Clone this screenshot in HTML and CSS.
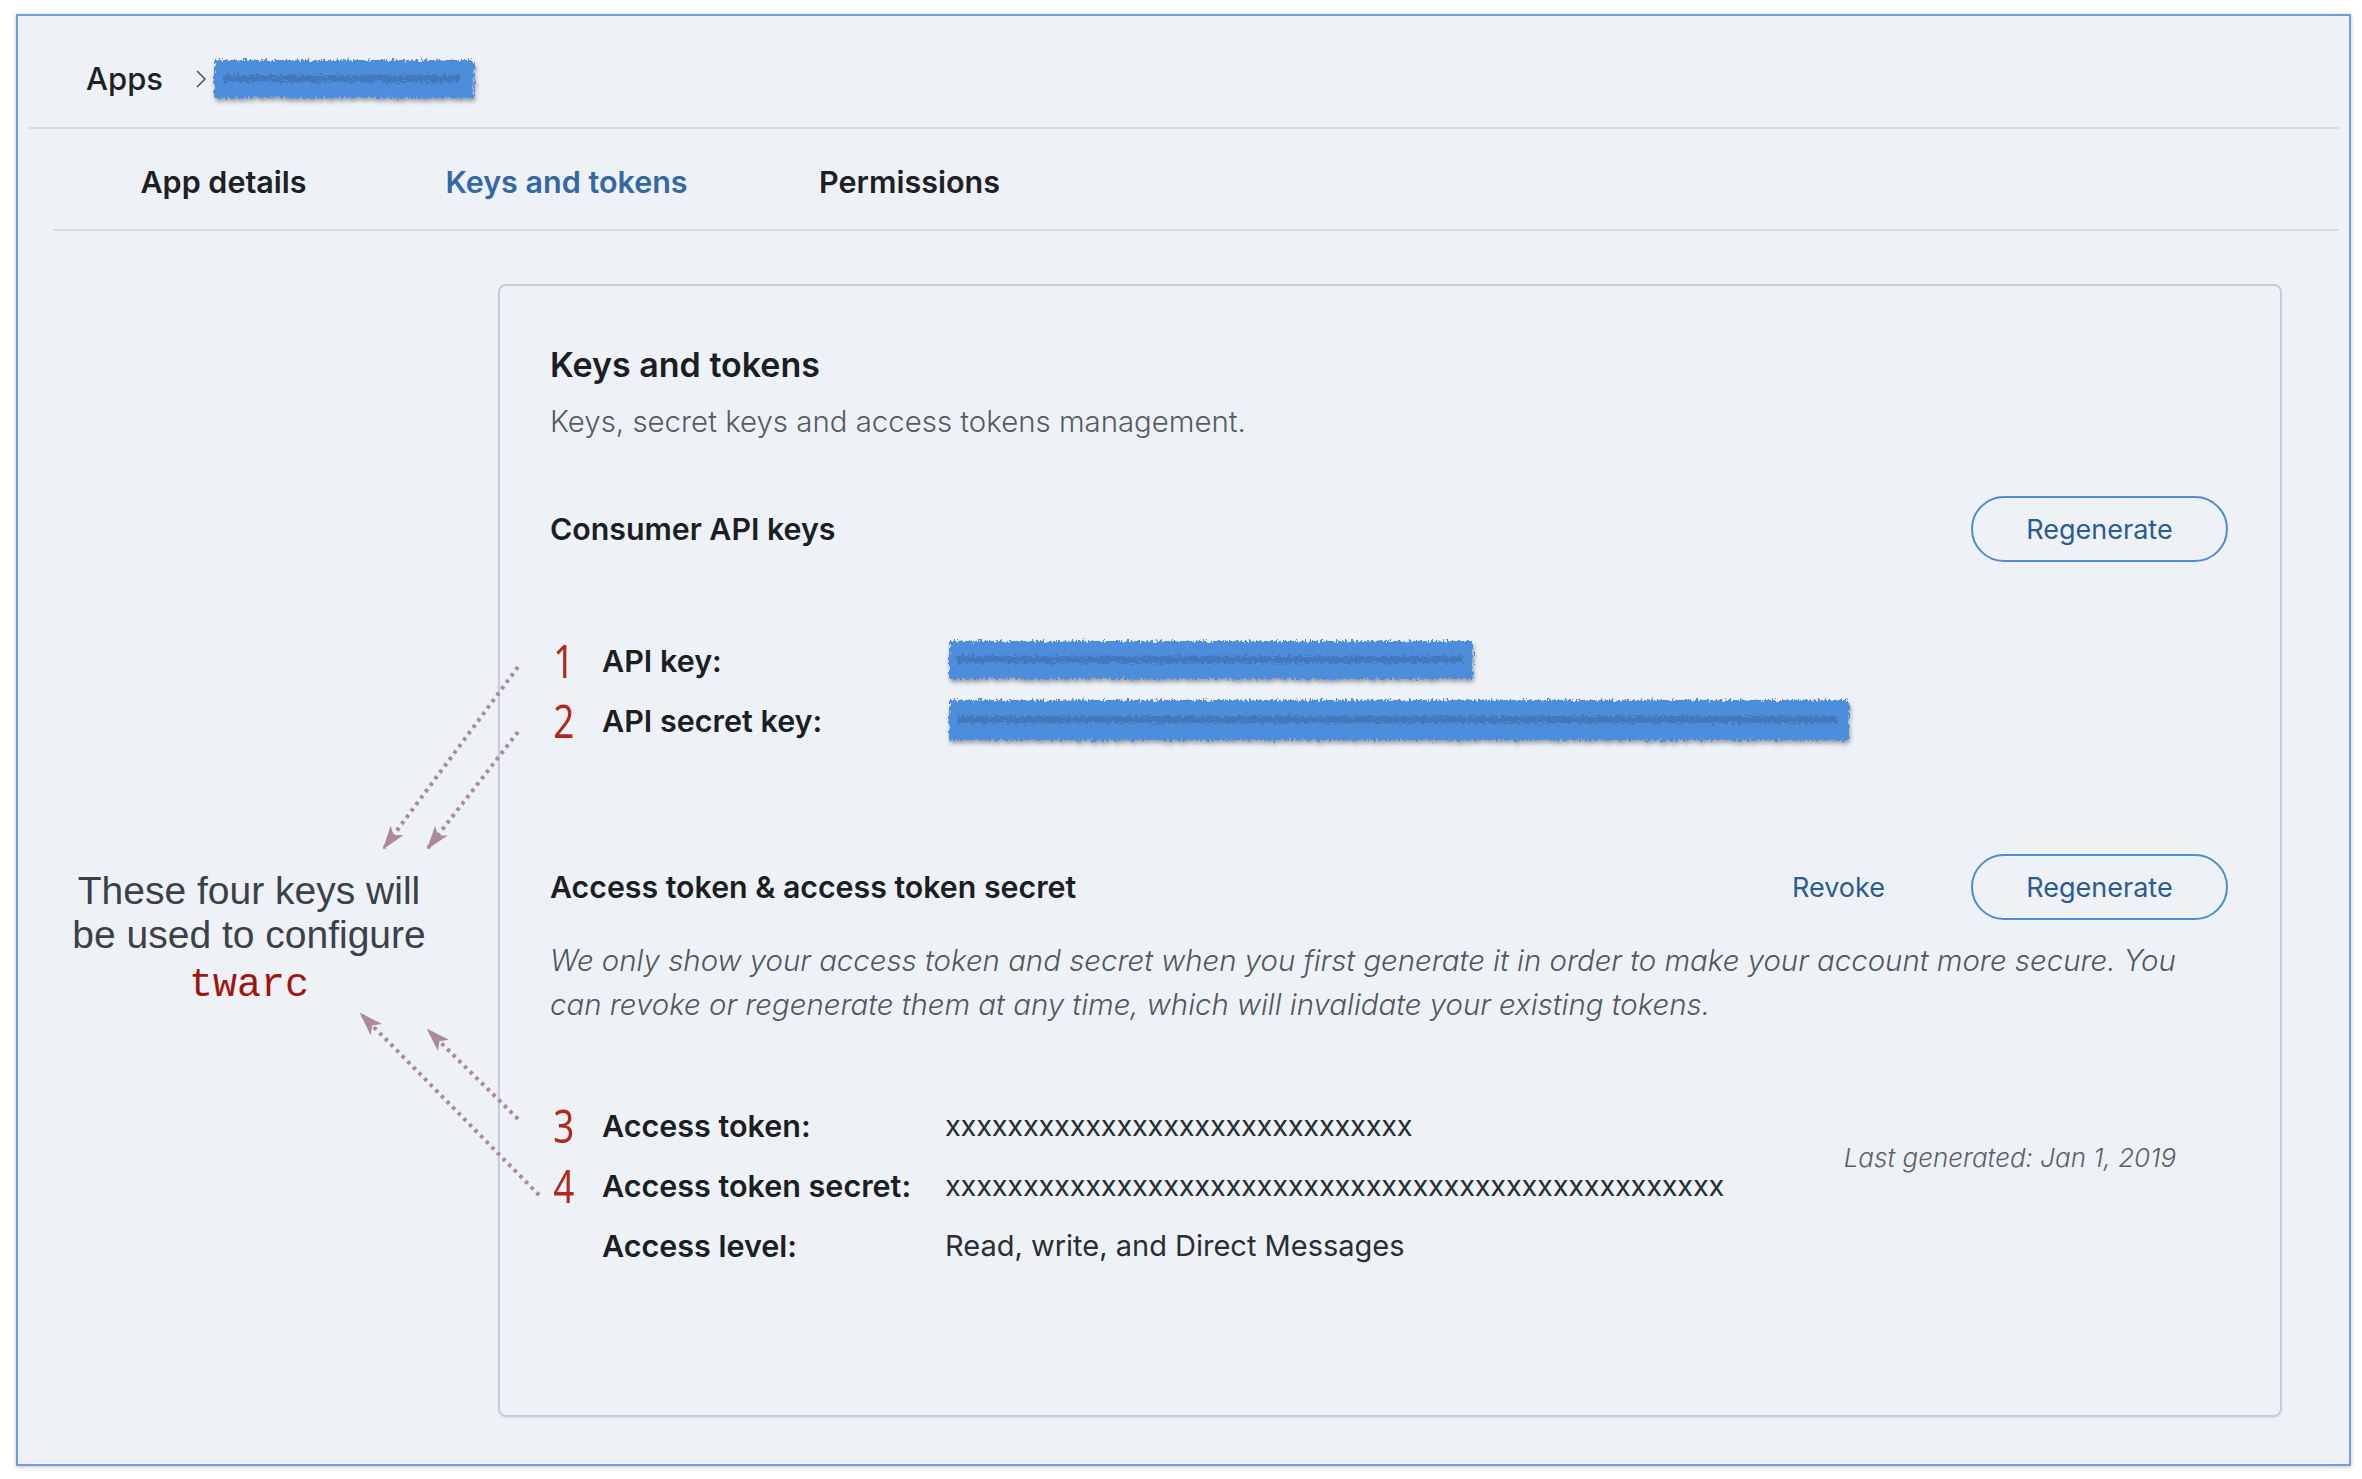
FILE: index.html
```html
<!DOCTYPE html>
<html lang="en">
<head>
<meta charset="utf-8">
<title>Keys and tokens</title>
<link rel="stylesheet" href="styles.css">
</head>
<body>
<svg class="defs" width="0" height="0" aria-hidden="true">
  <defs>
    <filter id="rough" x="-3%" y="-40%" width="106%" height="180%">
      <feTurbulence type="fractalNoise" baseFrequency="0.45 0.2" numOctaves="3" seed="4" result="n"/>
      <feDisplacementMap in="SourceGraphic" in2="n" scale="8" xChannelSelector="R" yChannelSelector="G"/>
    </filter>
    <filter id="streak" x="-3%" y="-80%" width="106%" height="260%">
      <feTurbulence type="fractalNoise" baseFrequency="0.3 0.6" numOctaves="3" seed="9" result="n"/>
      <feDisplacementMap in="SourceGraphic" in2="n" scale="10" xChannelSelector="R" yChannelSelector="G"/>
    </filter>
    <marker id="head" viewBox="0 0 24 16" refX="22" refY="8" markerWidth="24" markerHeight="16" markerUnits="userSpaceOnUse" orient="auto">
      <path d="M0 0 L24 8 L0 16 L6 8 Z" fill="#a98b9b"/>
    </marker>
  </defs>
</svg>

<div class="frame">
  <header class="crumbs">
    <span class="crumb">Apps</span>
    <svg class="chev" viewBox="0 0 12 20" width="12" height="20"><path d="M2 2 L10 10 L2 18" fill="none" stroke="#55595f" stroke-width="1.6"/></svg>
    <svg class="scribble" width="268" height="48" viewBox="0 0 268 48">
      <g filter="url(#rough)"><rect x="4" y="5" width="260" height="38" fill="#4d8edc"/></g>
      <g filter="url(#streak)"><rect x="14" y="20" width="236" height="7" fill="#3d6aa3" opacity=".6"/></g>
    </svg>
  </header>
  <div class="rule rule-top"></div>
  <nav class="tabs">
    <a class="tab" href="#">App details</a>
    <a class="tab tab-active" href="#">Keys and tokens</a>
    <a class="tab" href="#">Permissions</a>
  </nav>
  <div class="rule rule-tabs"></div>

  <main class="main">
    <aside class="note">
      <p>These four keys will<br>be used to configure<br><code>twarc</code></p>
    </aside>

    <section class="card">
      <h1 class="card-title">Keys and tokens</h1>
      <p class="card-sub">Keys, secret keys and access tokens management.</p>

      <div class="sec-head sec-consumer">
        <h2 class="sec-title">Consumer API keys</h2>
        <button class="btn">Regenerate</button>
      </div>

      <div class="rows rows-consumer">
        <div class="row">
          <span class="num">1</span>
          <span class="lbl">API key:</span>
          <span class="val">
            <svg class="scribble" width="532" height="48" viewBox="0 0 532 48">
              <g filter="url(#rough)"><rect x="4" y="5" width="524" height="38" fill="#4d8edc"/></g>
              <g filter="url(#streak)"><rect x="12" y="20" width="506" height="7" fill="#3d6aa3" opacity=".6"/></g>
            </svg>
          </span>
        </div>
        <div class="row">
          <span class="num">2</span>
          <span class="lbl">API secret key:</span>
          <span class="val">
            <svg class="scribble" width="908" height="50" viewBox="0 0 908 50">
              <g filter="url(#rough)"><rect x="4" y="5" width="900" height="40" fill="#4d8edc"/></g>
              <g filter="url(#streak)"><rect x="12" y="21" width="880" height="7" fill="#3d6aa3" opacity=".6"/></g>
            </svg>
          </span>
        </div>
      </div>

      <div class="sec-head sec-access">
        <h2 class="sec-title">Access token &amp; access token secret</h2>
        <a class="revoke" href="#">Revoke</a>
        <button class="btn">Regenerate</button>
      </div>
      <p class="hint">We only show your access token and secret when you first generate it in order to make your account more secure. You<br>can revoke or regenerate them at any time, which will invalidate your existing tokens.</p>

      <div class="tokens">
        <div class="rows">
          <div class="row">
            <span class="num">3</span>
            <span class="lbl">Access token:</span>
            <span class="val val-x">xxxxxxxxxxxxxxxxxxxxxxxxxxxxxx</span>
          </div>
          <div class="row">
            <span class="num">4</span>
            <span class="lbl">Access token secret:</span>
            <span class="val val-x">xxxxxxxxxxxxxxxxxxxxxxxxxxxxxxxxxxxxxxxxxxxxxxxxxx</span>
          </div>
          <div class="row">
            <span class="num"></span>
            <span class="lbl">Access level:</span>
            <span class="val">Read, write, and Direct Messages</span>
          </div>
        </div>
        <p class="last-gen">Last generated: Jan 1, 2019</p>
      </div>
    </section>
  </main>
</div>

<svg class="arrows" width="2362" height="1479" viewBox="0 0 2362 1479" aria-hidden="true">
  <g fill="none" stroke="#a98b9b" stroke-width="4" stroke-dasharray="3.5 4.5" marker-end="url(#head)">
    <path d="M518 667 L384 848"/>
    <path d="M518 732 L428 848"/>
    <path d="M518 1119 L428 1030"/>
    <path d="M539 1195 L361 1014"/>
  </g>
</svg>
</body>
</html>
```

FILE: styles.css
```css
html, body {
  margin: 0;
  padding: 0;
}

body {
  position: relative;
  width: 2362px;
  height: 1479px;
  overflow: hidden;
  background: #ffffff;
  font-family: Inter, "Noto Sans", sans-serif;
  color: #1b1f24;
}

.defs {
  position: absolute;
  width: 0;
  height: 0;
}

.frame {
  box-sizing: border-box;
  margin: 14px 0 0 16px;
  width: 2335px;
  height: 1452px;
  border: 2px solid #6e9fdc;
  background: #eef2f6;
  box-shadow: 0 1px 4px rgba(0, 0, 0, 0.25);
  display: flex;
  flex-direction: column;
}

/* breadcrumb */
.crumbs {
  box-sizing: border-box;
  height: 111px;
  padding: 14px 0 0 68px;
  display: flex;
  align-items: center;
}

.crumb {
  font-size: 31px;
  font-weight: 500;
  color: #1d2126;
}

.chev {
  margin-left: 32px;
}

.crumbs .scribble {
  margin-left: 3px;
}

.scribble {
  display: block;
  filter: drop-shadow(1px 3px 2px rgba(40, 50, 70, 0.45));
}

.rule {
  height: 2px;
  background: #d9dde3;
}

.rule-top {
  margin: 0 10px 0 11px;
}

.rule-tabs {
  margin: 0 10px 0 35px;
}

/* tabs: equal-width cells, labels centred */
.tabs {
  box-sizing: border-box;
  height: 100px;
  padding: 4px 0 0 34px;
  display: flex;
  align-items: center;
}

.tab {
  width: 343px;
  text-align: center;
  font-size: 30.5px;
  font-weight: 600;
  color: #1d2126;
  text-decoration: none;
}

.tab-active {
  color: #3468a5;
}

/* main */
.main {
  flex: 1;
  display: flex;
  padding: 53px 67px 47px 0;
}

.note {
  box-sizing: border-box;
  width: 480px;
  flex: none;
  padding: 585px 18px 0 0;
  text-align: center;
}

.note p {
  margin: 0;
  font-family: "Liberation Sans", Arial, sans-serif;
  font-size: 39px;
  line-height: 44px;
  color: #3c4149;
}

.note code {
  display: inline-block;
  margin-top: 5px;
  font-family: "Liberation Mono", "Courier New", monospace;
  font-size: 40px;
  line-height: 48px;
  color: #a3140f;
}

.card {
  flex: 1;
  box-sizing: border-box;
  border: 2px solid #c8cdd5;
  border-radius: 8px;
  box-shadow: 0 1px 2px rgba(0, 0, 0, 0.08);
  padding: 57px 52px 0 50px;
}

.card-title {
  margin: 0;
  font-size: 34px;
  font-weight: 600;
  line-height: 44px;
  color: #1b1f24;
}

.card-sub {
  margin: 15px 0 0;
  font-size: 29.4px;
  font-weight: 300;
  line-height: 40px;
  color: #555b63;
}

.sec-head {
  height: 66px;
  display: flex;
  align-items: center;
}

.sec-consumer {
  margin-top: 54px;
}

.sec-access {
  margin-top: 104px;
}

.sec-title {
  flex: 1;
  margin: 0;
  font-size: 30.3px;
  font-weight: 600;
  color: #1b1f24;
}

.btn {
  box-sizing: border-box;
  width: 257px;
  height: 66px;
  border: 2px solid #508bd2;
  border-radius: 33px;
  background: transparent;
  font-family: Inter, "Noto Sans", sans-serif;
  font-size: 27px;
  font-weight: 400;
  color: #2b5b8f;
  padding: 0;
}

.revoke {
  margin-right: 86px;
  font-size: 27px;
  color: #2b5b8f;
  text-decoration: none;
}

.rows-consumer {
  margin-top: 68px;
}

.row {
  height: 60px;
  display: flex;
  align-items: center;
}

.num {
  box-sizing: border-box;
  width: 52px;
  padding-left: 4px;
  font-family: "Noto Sans", "DejaVu Sans", sans-serif;
  font-size: 46px;
  line-height: 60px;
  color: #b0291c;
  transform: scaleX(0.8);
  transform-origin: left center;
}

.lbl {
  width: 343px;
  font-size: 30.5px;
  font-weight: 600;
  color: #1b1f24;
}

.val {
  font-size: 29px;
  font-weight: 400;
  color: #2a2e33;
}

.val-x {
  letter-spacing: -0.25px;
}

.hint {
  margin: 19px 0 0;
  font-size: 29.4px;
  font-weight: 300;
  font-style: italic;
  line-height: 44px;
  color: #51575f;
}

.tokens {
  margin-top: 68px;
  display: flex;
  justify-content: space-between;
}

.last-gen {
  margin: 43px 52px 0 0;
  font-size: 26px;
  font-weight: 300;
  font-style: italic;
  line-height: 40px;
  color: #5b6169;
}

/* annotation arrows overlay */
.arrows {
  position: absolute;
  left: 0;
  top: 0;
  pointer-events: none;
}
```
